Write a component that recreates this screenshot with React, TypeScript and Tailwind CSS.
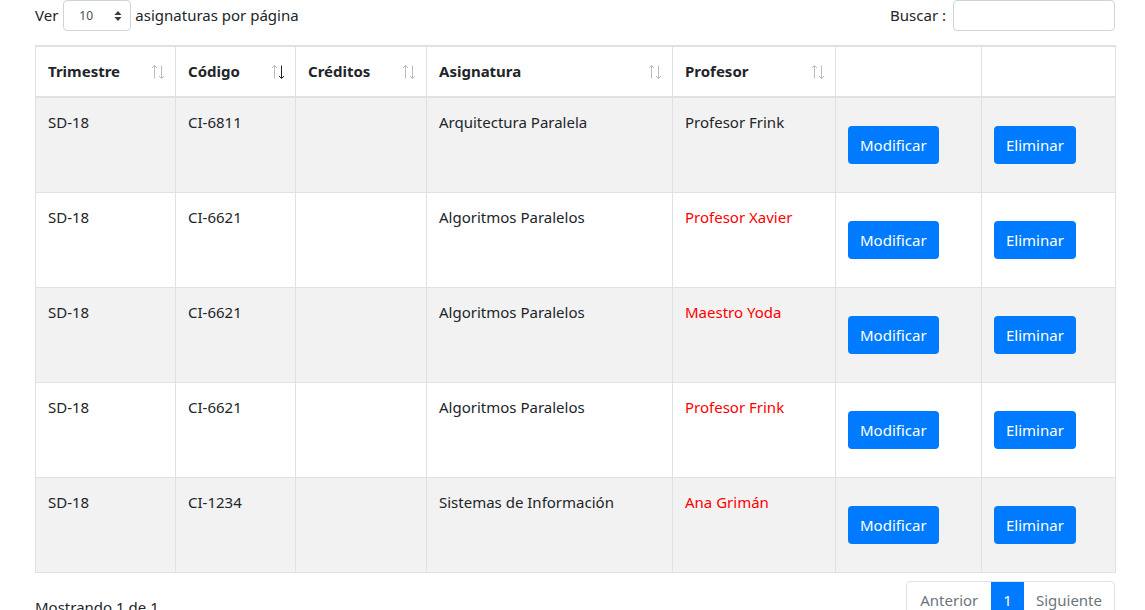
import React from "react";

type Row = {
  trimestre: string;
  codigo: string;
  creditos: string;
  asignatura: string;
  profesor: string;
  red: boolean;
};

const rows: Row[] = [
  { trimestre: "SD-18", codigo: "CI-6811", creditos: "", asignatura: "Arquitectura Paralela", profesor: "Profesor Frink", red: false },
  { trimestre: "SD-18", codigo: "CI-6621", creditos: "", asignatura: "Algoritmos Paralelos", profesor: "Profesor Xavier", red: true },
  { trimestre: "SD-18", codigo: "CI-6621", creditos: "", asignatura: "Algoritmos Paralelos", profesor: "Maestro Yoda", red: true },
  { trimestre: "SD-18", codigo: "CI-6621", creditos: "", asignatura: "Algoritmos Paralelos", profesor: "Profesor Frink", red: true },
  { trimestre: "SD-18", codigo: "CI-1234", creditos: "", asignatura: "Sistemas de Información", profesor: "Ana Grimán", red: true },
];

// header arrows, active = sorted column (down arrow dark)
function SortArrows({ active }: { active?: boolean }) {
  return (
    <svg
      width="14"
      height="16"
      viewBox="0 0 14 16"
      className="absolute right-[10px] top-[17px] text-[#212529]"
      fill="none"
      stroke="currentColor"
      strokeWidth="1"
    >
      <g opacity="0.3">
        <path d="M3.5 1.5 V14.5" />
        <path d="M1 4 L3.5 1.5 L6 4" />
      </g>
      <g opacity={active ? 1 : 0.3}>
        <path d="M10.5 1.5 V14.5" />
        <path d="M8 12 L10.5 14.5 L13 12" />
      </g>
    </svg>
  );
}

const headers: { label: string; w: string; sortable: boolean; active?: boolean }[] = [
  { label: "Trimestre", w: "w-[140px]", sortable: true },
  { label: "Código", w: "w-[120px]", sortable: true, active: true },
  { label: "Créditos", w: "w-[131px]", sortable: true },
  { label: "Asignatura", w: "w-[246px]", sortable: true },
  { label: "Profesor", w: "w-[163px]", sortable: true },
  { label: "", w: "w-[146px]", sortable: false },
  { label: "", w: "w-[134px]", sortable: false },
];

const cell = "align-top px-[12px] py-[12px] leading-[24px] border border-[#dee2e6]";

export default function App() {
  return (
    <div className="min-h-screen bg-white text-[#212529] text-[15px] font-['Noto_Sans',sans-serif]">
      <div className="ml-[35px] w-[1080px]">
        {/* Top controls */}
        <div className="flex items-center justify-between h-[31px]">
          <div className="flex items-center">
            <span>Ver</span>
            <div className="ml-[5px] flex items-center justify-between w-[68px] h-[31px] border border-[#ced4da] rounded-[4px] pl-[15px] pr-[8px]">
              <span className="text-[12px] text-[#495057]">10</span>
              <svg width="8" height="12" viewBox="0 0 8 12" className="text-[#343a40]">
                <path d="M4 1 L7.5 5 H0.5 Z M4 11 L0.5 7 H7.5 Z" fill="currentColor" />
              </svg>
            </div>
            <span className="ml-[4px]">asignaturas por página</span>
          </div>
          <div className="flex items-center">
            <span>Buscar :</span>
            <div className="ml-[7px] w-[162px] h-[31px] border border-[#ced4da] rounded-[4px]" />
          </div>
        </div>

        {/* Table */}
        <table className="mt-[14px] w-[1080px] table-fixed border-collapse">
          <thead>
            <tr>
              {headers.map((h, i) => (
                <th
                  key={i}
                  className={`${h.w} relative text-left font-bold px-[12px] pt-[12px] pb-[13px] leading-[24px] border border-[#dee2e6] border-t-2 border-b-2`}
                >
                  {h.label}
                  {h.sortable && <SortArrows active={h.active} />}
                </th>
              ))}
            </tr>
          </thead>
          <tbody>
            {rows.map((r, i) => (
              <tr key={i} className={i % 2 === 0 ? "bg-[#f2f2f2]" : "bg-white"}>
                <td className={`h-[95px] ${cell}`}>{r.trimestre}</td>
                <td className={cell}>{r.codigo}</td>
                <td className={cell}>{r.creditos}</td>
                <td className={cell}>{r.asignatura}</td>
                <td className={`${cell} ${r.red ? "text-[#ff0000]" : ""}`}>{r.profesor}</td>
                <td className="align-top px-[12px] py-[12px] border border-[#dee2e6]">
                  <button className="mt-[16px] h-[38px] px-[12px] rounded-[4px] bg-[#007bff] text-white leading-[24px]">
                    Modificar
                  </button>
                </td>
                <td className="align-top px-[12px] py-[12px] border border-[#dee2e6]">
                  <button className="mt-[16px] h-[38px] px-[12px] rounded-[4px] bg-[#007bff] text-white leading-[24px]">
                    Eliminar
                  </button>
                </td>
              </tr>
            ))}
          </tbody>
        </table>

        {/* Footer */}
        <div className="flex items-start justify-between">
          <div className="pt-[22px] leading-[24px]">Mostrando 1 de 1</div>
          <div className="mt-[8px] flex border border-[#dee2e6] rounded-[4px] overflow-hidden">
            <span className="px-[13px] py-[8px] leading-[20px] text-[#6c757d]">Anterior</span>
            <span className="px-[12px] py-[8px] leading-[20px] bg-[#007bff] text-white">1</span>
            <span className="px-[12px] py-[8px] leading-[20px] text-[#6c757d]">Siguiente</span>
          </div>
        </div>
      </div>
    </div>
  );
}
